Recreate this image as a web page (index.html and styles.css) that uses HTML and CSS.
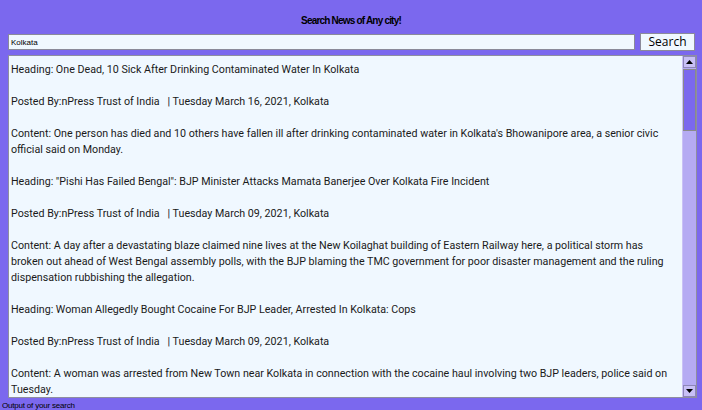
FILE: index.html
```html
<!DOCTYPE html>
<html>
<head>
<meta charset="utf-8">
<link rel="stylesheet" href="styles.css">
</head>
<body>
<div class="app">
  <div class="title">Search News of Any city!</div>
  <div class="search-row">
    <input class="city" type="text" value="Kolkata">
    <button class="search-btn">Search</button>
  </div>
  <div class="output">
    <div class="text">
      <p>Heading: One Dead, 10 Sick After Drinking Contaminated Water In Kolkata</p>
      <p>Posted By:nPress Trust of India &nbsp;&nbsp;| Tuesday March 16, 2021, Kolkata</p>
      <p>Content: One person has died and 10 others have fallen ill after drinking contaminated water in Kolkata's Bhowanipore area, a senior civic<br>official said on Monday.</p>
      <p>Heading: "Pishi Has Failed Bengal": BJP Minister Attacks Mamata Banerjee Over Kolkata Fire Incident</p>
      <p>Posted By:nPress Trust of India &nbsp;&nbsp;| Tuesday March 09, 2021, Kolkata</p>
      <p>Content: A day after a devastating blaze claimed nine lives at the New Koilaghat building of Eastern Railway here, a political storm has<br>broken out ahead of West Bengal assembly polls, with the BJP blaming the TMC government for poor disaster management and the ruling<br>dispensation rubbishing the allegation.</p>
      <p>Heading: Woman Allegedly Bought Cocaine For BJP Leader, Arrested In Kolkata: Cops</p>
      <p>Posted By:nPress Trust of India &nbsp;&nbsp;| Tuesday March 09, 2021, Kolkata</p>
      <p>Content: A woman was arrested from New Town near Kolkata in connection with the cocaine haul involving two BJP leaders, police said on<br>Tuesday.</p>
    </div>
    <div class="scrollbar">
      <div class="arrow up"><svg width="7" height="4" viewBox="0 0 7 4"><path d="M0 4 L3.5 0 L7 4 Z" fill="#000"/></svg></div>
      <div class="thumb"></div>
      <div class="track"></div>
      <div class="arrow down"><svg width="7" height="4" viewBox="0 0 7 4"><path d="M0 0 L3.5 4 L7 0 Z" fill="#000"/></svg></div>
    </div>
  </div>
  <div class="footer">Output of your search</div>
</div>
</body>
</html>
```

FILE: styles.css
```css
html, body {
  margin: 0;
  padding: 0;
  background: #7b68ee;
  width: 702px;
  height: 410px;
  overflow: hidden;
}
.app {
  display: flex;
  flex-direction: column;
  height: 410px;
}
.title {
  font-family: "Liberation Sans", Arial, sans-serif;
  font-weight: bold;
  font-size: 10px;
  letter-spacing: -0.8px;
  color: #000;
  text-align: center;
  height: 35px;
  line-height: 12px;
  padding-top: 15px;
  box-sizing: border-box;
}
.search-row {
  display: flex;
  align-items: center;
  gap: 5px;
  padding: 0 7px 0 8px;
  height: 18px;
}
.city {
  flex: 1;
  height: 16px;
  box-sizing: border-box;
  margin: 0;
  padding: 0 2px;
  border: 1px solid #8a8a9a;
  background: #f0f8ff;
  font-family: "Liberation Sans", Arial, sans-serif;
  font-size: 8px;
  color: #000;
  outline: none;
}
.search-btn {
  width: 55px;
  height: 18px;
  box-sizing: border-box;
  margin: 0;
  padding: 0;
  border: 1px solid #8a8a9a;
  background: #f0f8ff;
  font-family: "Open Sans", sans-serif;
  font-size: 12px;
  line-height: 16px;
  color: #000;
}
.output {
  margin: 4px 5px 0 8px;
  height: 343px;
  box-sizing: border-box;
  border: 1px solid #8e8ea0;
  background: #f0f8ff;
  display: flex;
}
.text {
  flex: 1;
  padding: 6px 0 0 2px;
  font-family: Roboto, sans-serif;
  font-size: 10.7px;
  line-height: 16px;
  color: #1a1a1a;
  white-space: nowrap;
  overflow: hidden;
}
.text p {
  margin: 0 0 16px 0;
}
.scrollbar {
  width: 13px;
  display: flex;
  flex-direction: column;
  background: #b5abf3;
  border-left: 1px solid #c9c1f6;
}
.arrow {
  height: 12px;
  display: flex;
  align-items: center;
  justify-content: center;
  background: #c8c0f6;
  border: 1px solid #8d86b8;
  box-sizing: border-box;
}
.thumb {
  height: 62px;
  background: #7b68ee;
  border: 1px solid #8a8a8a;
  box-sizing: border-box;
  margin-top: 1px;
}
.track {
  flex: 1;
}
.footer {
  font-family: "Liberation Sans", Arial, sans-serif;
  font-size: 8px;
  letter-spacing: -0.2px;
  color: #000;
  padding: 3px 0 0 2px;
  line-height: 9px;
}
```
